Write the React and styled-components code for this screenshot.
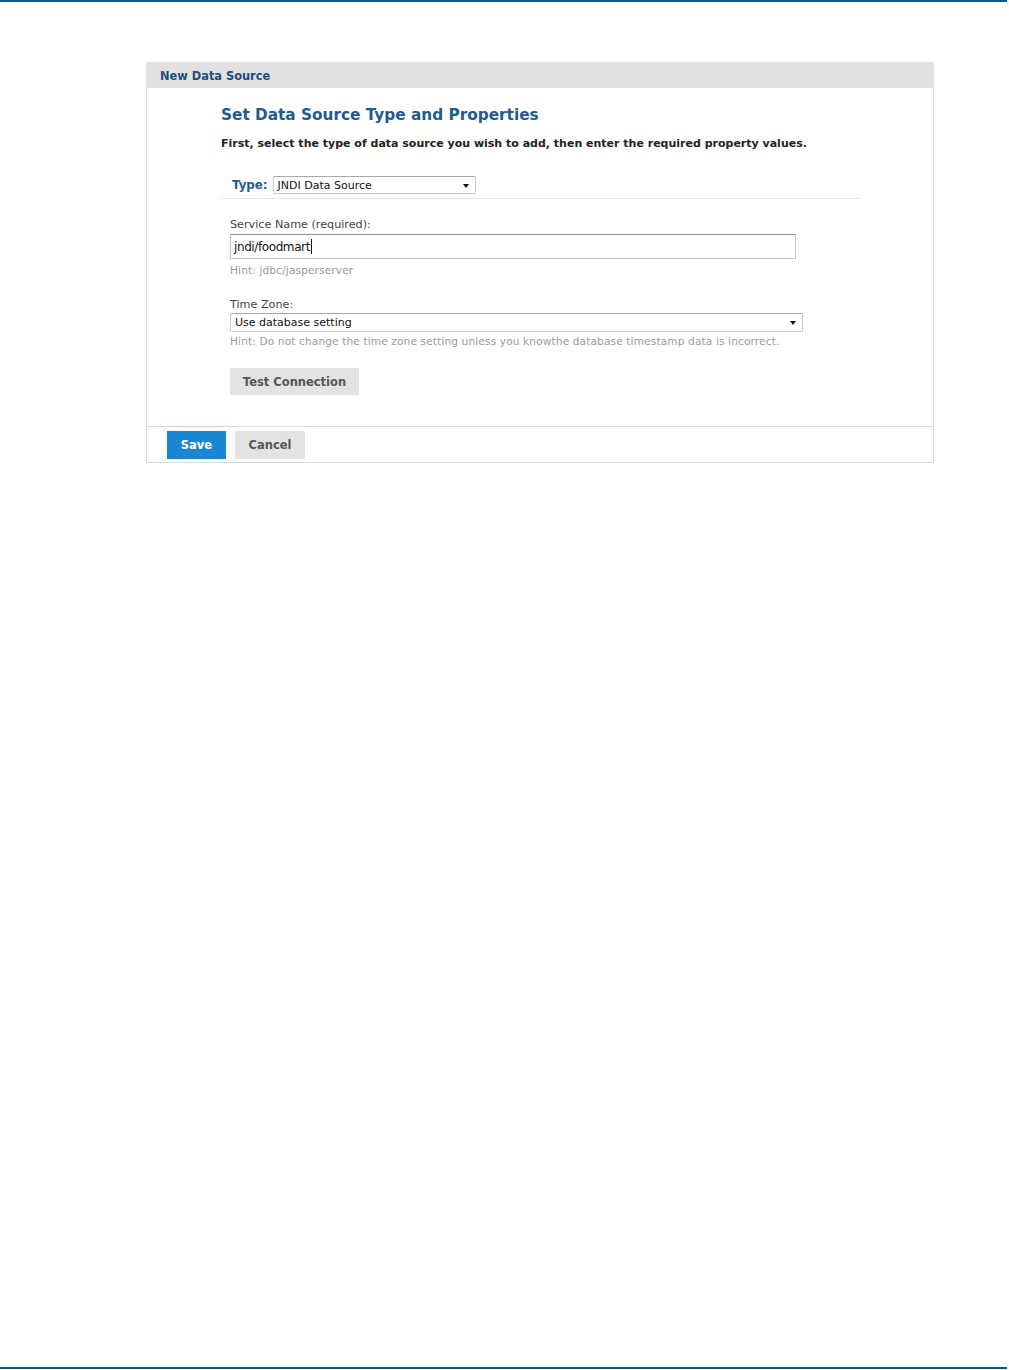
import React from "react";
import styled, { createGlobalStyle } from "styled-components";

const GlobalStyle = createGlobalStyle`
  html, body {
    margin: 0;
    padding: 0;
    background: #ffffff;
  }
  body {
    font-family: "DejaVu Sans", Verdana, sans-serif;
    color: #222;
  }
`;

function App() {
  return (
    <Page>
      <GlobalStyle />
      <Rule />
      <Panel>
        <PanelHeader>New Data Source</PanelHeader>
        <PanelBody>
          <Heading>Set Data Source Type and Properties</Heading>
          <Intro>
            First, select the type of data source you wish to add, then enter
            the required property values.
          </Intro>
          <TypeRow>
            <TypeLabel>Type:</TypeLabel>
            <SelectBox width="203px" height="18px">
              <span>JNDI Data Source</span>
              <Caret />
            </SelectBox>
          </TypeRow>
          <Fields>
            <FieldLabel gap="2px">Service Name (required):</FieldLabel>
            <TextBox>
              jndi/foodmart<Cursor />
            </TextBox>
            <Hint>Hint: jdbc/jasperserver</Hint>

            <FieldLabel top="22px" gap="1px">Time Zone:</FieldLabel>
            <SelectBox width="573px" height="19px">
              <span>Use database setting</span>
              <Caret />
            </SelectBox>
            <Hint top="3px">
              Hint: Do not change the time zone setting unless you knowthe
              database timestamp data is incorrect.
            </Hint>
            <GrayButton wide>Test Connection</GrayButton>
          </Fields>
        </PanelBody>
        <PanelFooter>
          <BlueButton>Save</BlueButton>
          <GrayButton>Cancel</GrayButton>
        </PanelFooter>
      </Panel>
      <Rule bottom />
    </Page>
  );
}

const Page = styled.div`
  min-height: 1370px;
  display: flex;
  flex-direction: column;
`;

const Rule = styled.div`
  width: 1007px;
  height: 2px;
  background: #0b5a82;
  margin-top: ${(p) => (p.bottom ? "auto" : "0")};
  margin-bottom: ${(p) => (p.bottom ? "1px" : "0")};
`;

const Panel = styled.div`
  width: 788px;
  margin: 60px 0 0 146px;
  box-sizing: border-box;
`;

const PanelHeader = styled.div`
  height: 26px;
  box-sizing: border-box;
  padding: 1px 0 0 14px;
  background: #e1e1e1;
  display: flex;
  align-items: center;
  font-size: 11.4px;
  font-weight: bold;
  color: #1c4e79;
`;

const PanelBody = styled.div`
  border-left: 1px solid #dcdcdc;
  border-right: 1px solid #dcdcdc;
  padding: 16px 0 31px 74px;
`;

const Heading = styled.h2`
  margin: 0;
  font-size: 15.3px;
  line-height: 22px;
  font-weight: bold;
  color: #1f5b8e;
`;

const Intro = styled.p`
  margin: 11px 0 0;
  font-size: 11px;
  line-height: 14px;
  font-weight: bold;
  color: #222;
`;

const TypeRow = styled.div`
  display: flex;
  align-items: center;
  gap: 5px;
  margin-top: 25px;
  width: 628px;
  padding: 0 0 4px 11px;
  border-bottom: 1px solid #e4e4ea;
`;

const TypeLabel = styled.span`
  font-size: 11.8px;
  font-weight: bold;
  color: #1f5b8e;
`;

const SelectBox = styled.div`
  box-sizing: border-box;
  width: ${(p) => p.width};
  height: ${(p) => p.height};
  border: 1px solid #c8c8c8;
  border-top-color: #a8a8a8;
  border-radius: 2px;
  display: flex;
  align-items: center;
  justify-content: space-between;
  padding: 0 6px 0 4px;
  font-size: 11px;
  color: #111;
  background: #fff;
`;

const Caret = styled.span`
  width: 0;
  height: 0;
  border-left: 3.5px solid transparent;
  border-right: 3.5px solid transparent;
  border-top: 4px solid #111;
  margin-top: 1px;
`;

const Fields = styled.div`
  padding: 19px 0 0 9px;
  display: flex;
  flex-direction: column;
  align-items: flex-start;
`;

const FieldLabel = styled.label`
  font-size: 11.2px;
  line-height: 14px;
  color: #444;
  margin-top: ${(p) => p.top || "0"};
  margin-bottom: ${(p) => p.gap || "3px"};
`;

const TextBox = styled.div`
  box-sizing: border-box;
  width: 566px;
  height: 25px;
  border: 1px solid #c4c4c4;
  border-top-color: #8e8e8e;
  display: flex;
  align-items: center;
  padding-left: 3px;
  font-size: 12px;
  color: #111;
  letter-spacing: -0.4px;
`;

const Cursor = styled.span`
  display: inline-block;
  width: 1px;
  height: 15px;
  background: #111;
  margin-left: 1px;
`;

const Hint = styled.div`
  font-size: 10.6px;
  line-height: 12px;
  letter-spacing: 0.12px;
  color: #9a9a9a;
  margin-top: ${(p) => p.top || "5px"};
`;

const Button = styled.button`
  border: none;
  padding: 0;
  height: 27px;
  font-family: inherit;
  font-size: 11.5px;
  font-weight: bold;
  cursor: pointer;
`;

const GrayButton = styled(Button)`
  background: #e3e3e3;
  color: #555;
  width: ${(p) => (p.wide ? "129px" : "70px")};
  margin-top: ${(p) => (p.wide ? "21px" : "0")};
`;

const BlueButton = styled(Button)`
  background: #1a86d6;
  color: #fff;
  width: 59px;
`;

const PanelFooter = styled.div`
  border: 1px solid #dcdcdc;
  height: 37px;
  box-sizing: border-box;
  padding: 4px 0 0 20px;
  display: flex;
  align-items: flex-start;
  gap: 9px;

  ${Button} {
    height: 28px;
  }
`;

export default App;
